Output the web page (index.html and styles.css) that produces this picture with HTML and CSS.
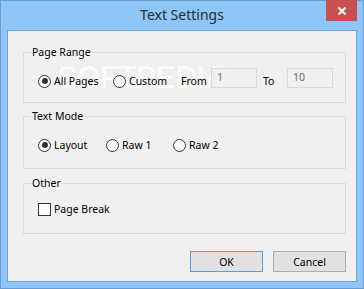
FILE: index.html
```html
<!DOCTYPE html>
<html>
<head>
<meta charset="utf-8">
<link rel="stylesheet" href="styles.css">
</head>
<body>
<div class="window">
  <div class="titlebar">
    <span class="spacer"></span>
    <div class="title">Text Settings</div>
    <button class="close" aria-label="Close">
      <svg width="8" height="8" viewBox="0 0 8 8"><path d="M0.5 0.5L7.5 7.5M7.5 0.5L0.5 7.5" stroke="#fff" stroke-width="2" fill="none"/></svg>
    </button>
  </div>
  <div class="client">
    <div class="watermark">SOFTPEDIA<span class="reg">®</span></div>
    <fieldset class="group group-range">
      <legend>Page Range</legend>
      <div class="row">
        <label class="opt w75"><span class="radio checked"></span>All Pages</label>
        <label class="opt w68"><span class="radio"></span>Custom</label>
        <span class="lbl w30">From</span>
        <span class="field">1</span>
        <span class="lbl to">To</span>
        <span class="field">10</span>
      </div>
    </fieldset>
    <fieldset class="group group-mode">
      <legend>Text Mode</legend>
      <div class="row">
        <label class="opt w68"><span class="radio checked"></span>Layout</label>
        <label class="opt w67"><span class="radio"></span>Raw 1</label>
        <label class="opt"><span class="radio"></span>Raw 2</label>
      </div>
    </fieldset>
    <fieldset class="group group-other">
      <legend>Other</legend>
      <div class="row">
        <label class="opt"><span class="check"></span>Page Break</label>
      </div>
    </fieldset>
    <div class="buttons">
      <button class="btn default">OK</button>
      <button class="btn">Cancel</button>
    </div>
  </div>
</div>
</body>
</html>
```
FILE: styles.css
```css
* { box-sizing: border-box; }
html, body { margin: 0; padding: 0; }
body {
  font-family: "Noto Sans", "Open Sans", sans-serif;
  font-size: 10.5px;
  color: #000;
  background: #8ec6f8;
}
.window {
  width: 364px;
  height: 289px;
  background: #8ec6f8;
  border: 1px solid #6a9ccf;
  padding: 0 6px 6px 6px;
  display: flex;
  flex-direction: column;
}
.titlebar {
  height: 29px;
  flex: none;
  display: grid;
  grid-template-columns: 1fr auto 1fr;
  align-items: start;
}
.title {
  font-size: 14px;
  line-height: 20px;
  padding-top: 4px;
  color: #2b2b2b;
}
.close {
  justify-self: end;
  margin-top: -1px;
  width: 31px;
  height: 21px;
  border: 0;
  padding: 0;
  background: #c75050;
  display: flex;
  align-items: center;
  justify-content: center;
}
.client {
  flex: 1;
  position: relative;
  background: #f0f0f0;
  border: 1px solid #6fa2d4;
  padding: 14px 10px 9px 15px;
}
.watermark {
  position: absolute;
  left: 49px;
  top: 28px;
  font-family: "Liberation Sans", sans-serif;
  font-weight: bold;
  font-size: 31px;
  line-height: 38px;
  letter-spacing: -1px;
  color: #fafafa;
  text-shadow: 0 0 1px #dadada;
  pointer-events: none;
}
.watermark .reg {
  font-size: 9px;
  vertical-align: top;
  font-weight: normal;
  line-height: 14px;
}
.group {
  position: relative;
  margin: 0;
  border: 1px solid #dcdcdc;
  padding: 12px 0 11px 14px;
  min-width: 0;
}
.group legend {
  font-size: 10.5px;
  line-height: 14px;
  padding: 0 1px;
  margin-left: -7px;
  color: #000;
}
.group-mode { margin-top: 6px; padding-top: 12px; padding-bottom: 13px; }
.group-other { margin-top: 7px; padding-top: 9px; padding-bottom: 14px; }
.row {
  display: flex;
  align-items: center;
  height: 20px;
}
.opt {
  display: flex;
  align-items: center;
  gap: 3px;
  white-space: nowrap;
}
.w75 { width: 75px; }
.w68 { width: 68px; }
.w67 { width: 67px; }
.w30 { width: 30px; }
.lbl.to { width: 24px; margin-left: 6px; }
.radio {
  width: 13px;
  height: 13px;
  border: 1px solid #333;
  border-radius: 50%;
  background: #fff;
  flex: none;
  display: flex;
  align-items: center;
  justify-content: center;
}
.radio.checked::after {
  content: "";
  width: 6px;
  height: 6px;
  border-radius: 50%;
  background: #333;
}
.check {
  width: 13px;
  height: 13px;
  border: 1px solid #333;
  background: #fff;
  flex: none;
}
.field {
  align-self: flex-start;
  margin-top: -3px;
  width: 46px;
  height: 20px;
  border: 1px solid #d9d9d9;
  background: #f0f0f0;
  color: #6d6d6d;
  padding: 0 5px;
  line-height: 17px;
}
.buttons {
  margin-top: 17px;
  display: flex;
  justify-content: flex-end;
  gap: 10px;
}
.btn {
  width: 73px;
  height: 21px;
  font-family: "Noto Sans", "Open Sans", sans-serif;
  font-size: 10.5px;
  color: #000;
  background: #e1e1e1;
  border: 1px solid #adadad;
  padding: 0;
}
.btn.default { border-color: #569de5; }
```
